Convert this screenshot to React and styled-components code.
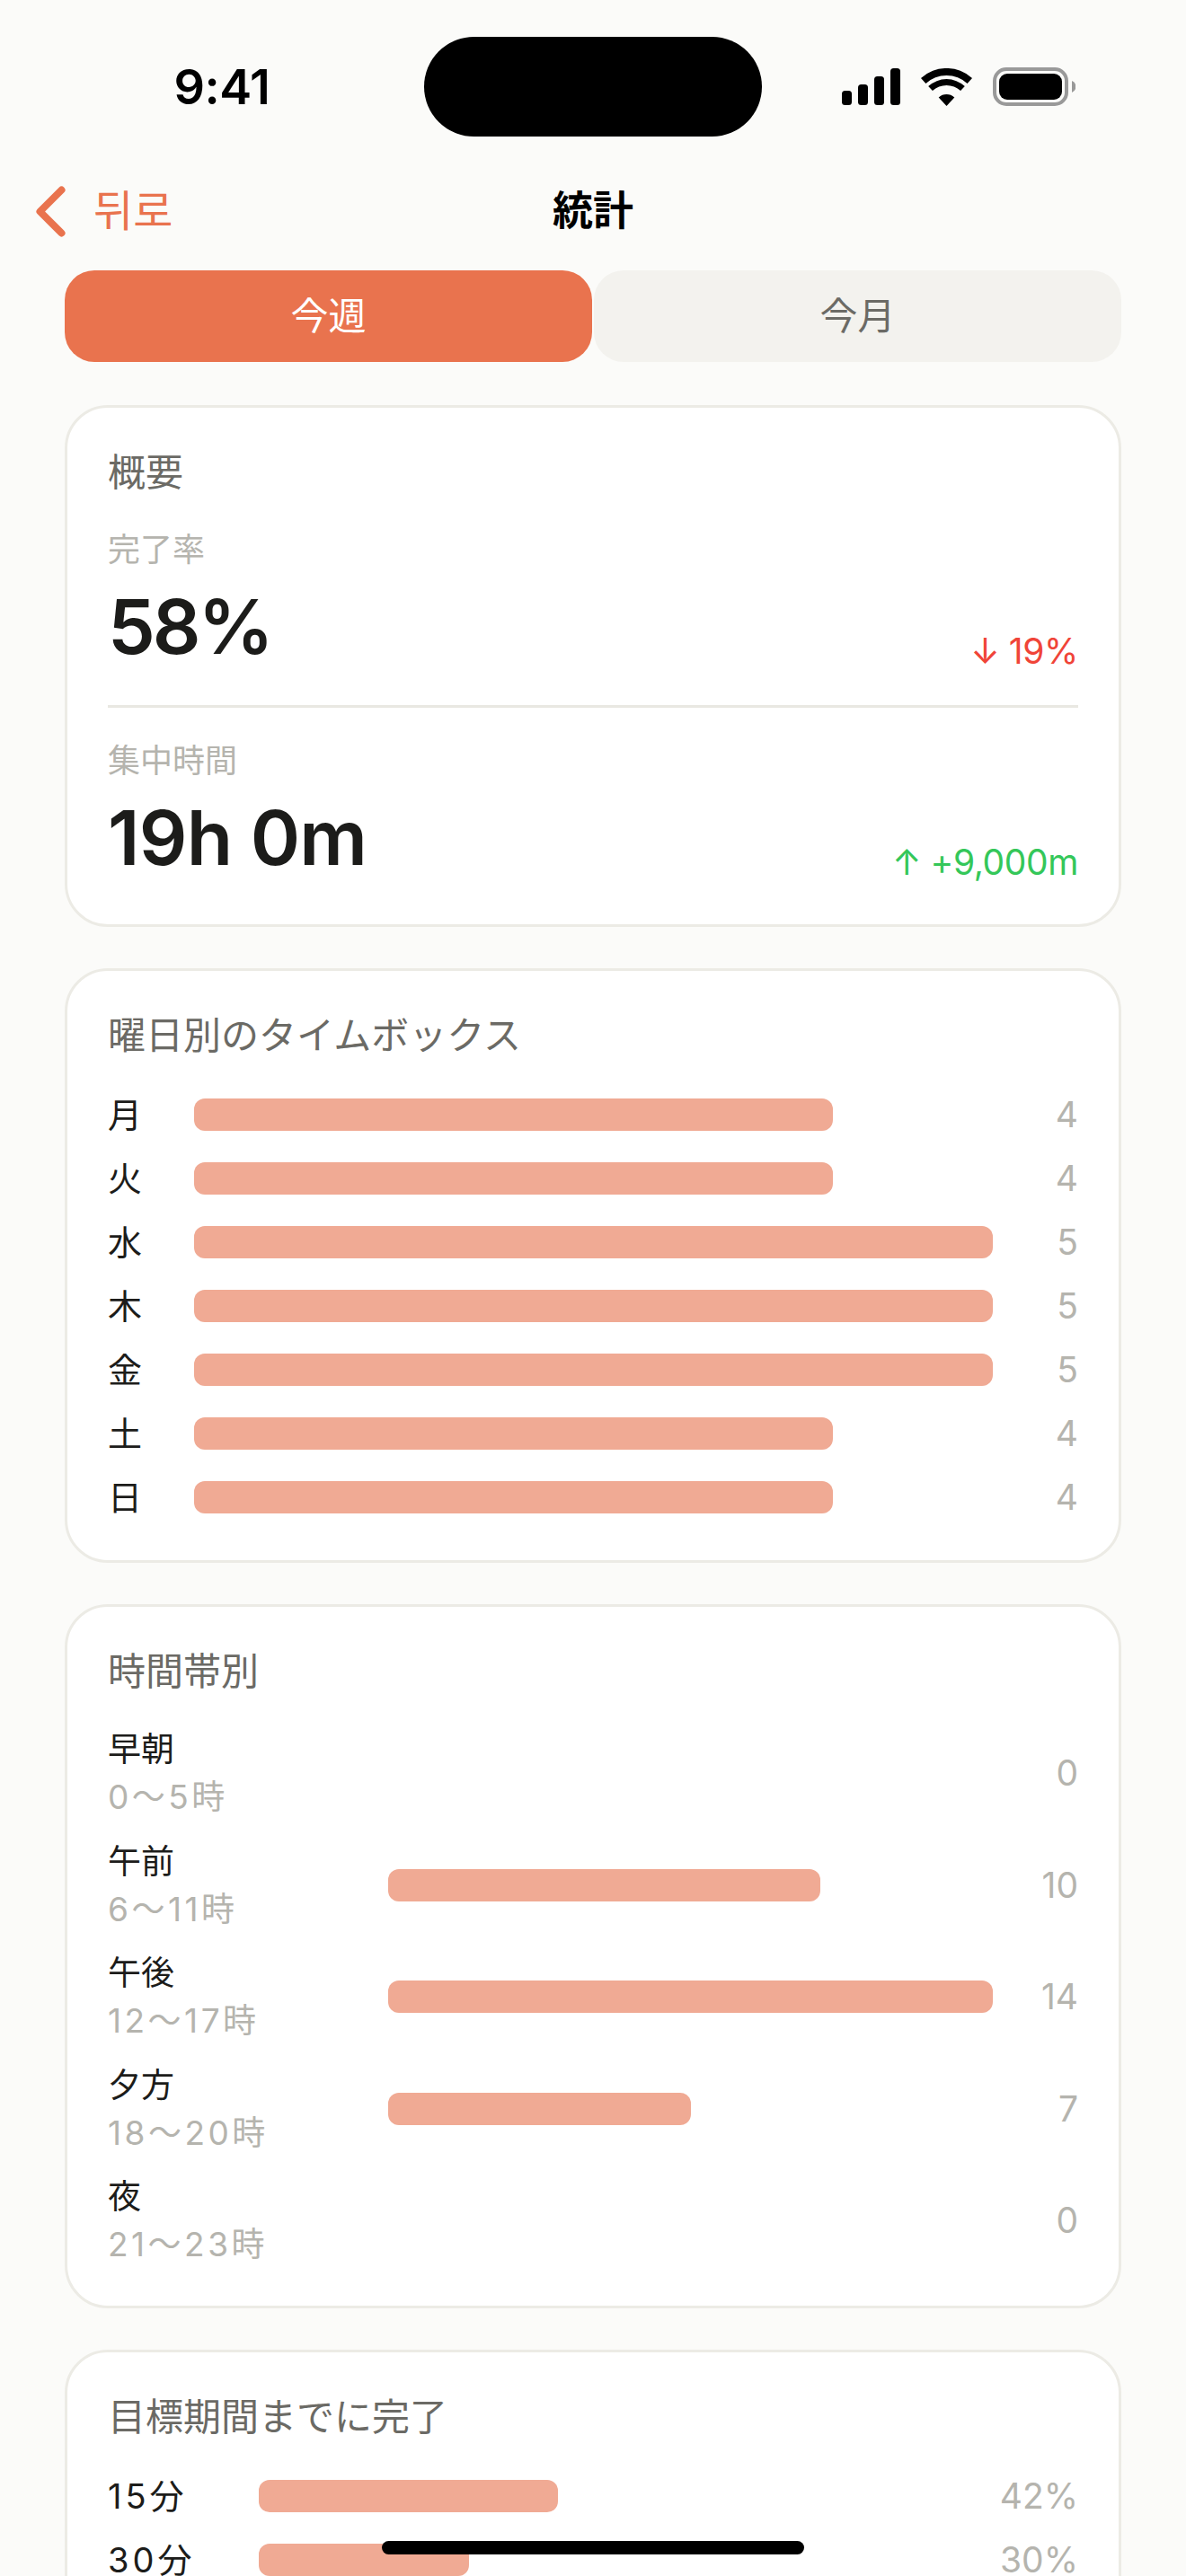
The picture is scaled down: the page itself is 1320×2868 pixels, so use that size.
import React from 'react';
import styled, { createGlobalStyle } from 'styled-components';

const accent = '#e9734e';
const fonts = `Inter, "Noto Sans CJK JP", "Noto Sans CJK KR", sans-serif`;

const GlobalStyle = createGlobalStyle`
  html, body {
    margin: 0;
    padding: 0;
    background: #fbfbf9;
  }
  body {
    font-family: ${fonts};
  }
`;

const Screen = styled.div`
  position: relative;
  width: 1320px;
  height: 2868px;
  overflow: hidden;
  background: #fbfbf9;
`;

const StatusBar = styled.div`
  display: grid;
  grid-template-columns: 472px 376px 472px;
  align-items: center;
  padding-top: 41px;
`;

const Time = styled.div`
  padding-left: 22px;
  text-align: center;
  font-size: 54px;
  line-height: 111px;
  font-weight: 600;
  letter-spacing: -0.5px;
  color: #000;
`;

const Island = styled.div`
  height: 111px;
  border-radius: 56px;
  background: #000;
`;

const StatusIcons = styled.div`
  display: flex;
  align-items: center;
  gap: 23px;
  padding-left: 89px;
  svg {
    display: block;
  }
`;

const Nav = styled.div`
  display: grid;
  grid-template-columns: 1fr auto 1fr;
  align-items: center;
  height: 72px;
  margin-top: 47px;
  padding-left: 40px;
`;

const BackLink = styled.div`
  display: flex;
  align-items: center;
  gap: 31px;
  color: ${accent};
  font-size: 48px;
  line-height: 72px;
`;

const NavTitle = styled.div`
  margin-left: -40px;
  font-size: 45px;
  line-height: 72px;
  font-weight: 700;
  color: #000;
`;

const Content = styled.div`
  display: flex;
  flex-direction: column;
  margin-top: 30px;
  padding: 0 72px;
`;

const Tabs = styled.div`
  display: flex;
  gap: 2px;
  margin-bottom: 48px;
`;

const Tab = styled.div`
  flex: 1;
  height: 102px;
  border-radius: 33px;
  background: ${(p) => (p.$active ? accent : '#f3f2ee')};
  color: ${(p) => (p.$active ? '#fff' : '#6b6a65')};
  font-size: 42px;
  line-height: 102px;
  text-align: center;
`;

const Card = styled.section`
  box-sizing: border-box;
  margin-bottom: 46px;
  padding: 45px 45px 48px;
  border: 3px solid #ecebe5;
  border-radius: 48px;
  background: #fff;
`;

const CardTitle = styled.h2`
  margin: 0 0 ${(p) => p.$gap}px;
  font-size: 42px;
  line-height: 54px;
  font-weight: 400;
  color: #6b6a65;
`;

const Metric = styled.div`
  padding-bottom: ${(p) => (p.$last ? 0 : 36)}px;
  margin-bottom: ${(p) => (p.$last ? -3 : 33)}px;
  border-bottom: ${(p) => (p.$last ? 'none' : '3px solid #e9e8e2')};
`;

const MetricLabel = styled.div`
  margin-bottom: 9px;
  font-size: 36px;
  line-height: 52px;
  color: #b5b4ae;
`;

const MetricRow = styled.div`
  display: flex;
  align-items: flex-end;
  justify-content: space-between;
`;

const MetricValue = styled.div`
  font-size: 84px;
  line-height: 102px;
  font-weight: 600;
  letter-spacing: ${(p) => p.$tracking}px;
  color: #1c1c1a;
`;

const Delta = styled.div`
  font-size: 39px;
  line-height: 48px;
  letter-spacing: -0.4px;
  color: ${(p) => (p.$up ? '#34c759' : '#f04438')};
`;

const Rows = styled.div`
  display: flex;
  flex-direction: column;
  gap: ${(p) => p.$gap}px;
`;

const Row = styled.div`
  display: flex;
  align-items: center;
`;

const Label = styled.div`
  flex: 0 0 ${(p) => p.$width}px;
  font-size: 38px;
  line-height: 44px;
  letter-spacing: ${(p) => p.$tracking || 0}px;
  color: #1c1c1a;
`;

const SlotName = styled.div`
  font-size: 37px;
  line-height: 41px;
  color: #1c1c1a;
`;

const SlotHours = styled.div`
  margin-top: 12px;
  font-size: 37px;
  line-height: 41px;
  letter-spacing: 3.5px;
  color: #b5b4ae;
`;

const Track = styled.div`
  flex: 1;
  height: 36px;
`;

const Fill = styled.div`
  height: 100%;
  border-radius: 12px;
  background: #f0aa94;
`;

const Count = styled.div`
  flex: 0 0 95px;
  font-size: 39px;
  line-height: 44px;
  text-align: right;
  color: #b5b4ae;
`;

const HomeIndicator = styled.div`
  position: absolute;
  left: 425px;
  bottom: 24px;
  width: 470px;
  height: 15px;
  border-radius: 8px;
  background: #000;
`;

const days = [
  ['月', 4],
  ['火', 4],
  ['水', 5],
  ['木', 5],
  ['金', 5],
  ['土', 4],
  ['日', 4],
];

const slots = [
  ['早朝', '0〜5時', 0],
  ['午前', '6〜11時', 10],
  ['午後', '12〜17時', 14],
  ['夕方', '18〜20時', 7],
  ['夜', '21〜23時', 0],
];

// bar lengths in this card are not the percentage itself
const goals = [
  ['15分', 42, 40.8],
  ['30分', 30, 28.6],
];

function SignalIcon() {
  return (
    <svg width="65" height="41" viewBox="0 0 65 41" fill="#000">
      <rect x="0" y="25" width="11" height="16" rx="3.5" />
      <rect x="18" y="18" width="11" height="23" rx="3.5" />
      <rect x="36" y="9" width="11" height="32" rx="3.5" />
      <rect x="54" y="0" width="11" height="41" rx="3.5" />
    </svg>
  );
}

function WifiIcon() {
  return (
    <svg width="57" height="42" viewBox="0 0 57 42" fill="#000">
      <path d="M0 11.1A42 42 0 0 1 57 11.1L51.6 17A34 34 0 0 0 5.4 17Z" />
      <path d="M8.2 20A30 30 0 0 1 48.8 20L44.1 25.1A23 23 0 0 0 12.9 25.1Z" />
      <path d="M19.7 32.4A13 13 0 0 1 37.3 32.4L28.5 42Z" />
    </svg>
  );
}

function BatteryIcon() {
  return (
    <svg width="92" height="43" viewBox="0 0 92 43">
      <rect x="2" y="2" width="80" height="39" rx="13" fill="none" stroke="#999" strokeWidth="4" />
      <rect x="7" y="7" width="70" height="29" rx="9" fill="#000" />
      <path d="M88 15a7 7 0 0 1 0 13Z" fill="#999" />
    </svg>
  );
}

function Chevron() {
  return (
    <svg width="33" height="57" viewBox="0 0 33 57" fill="none">
      <path d="M28.5 4.5L4.5 28.5L28.5 52.5" stroke={accent} strokeWidth="8" strokeLinecap="round" strokeLinejoin="round" />
    </svg>
  );
}

function App() {
  return (
    <Screen>
      <GlobalStyle />
      <StatusBar>
        <Time>9:41</Time>
        <Island />
        <StatusIcons>
          <SignalIcon />
          <WifiIcon />
          <BatteryIcon />
        </StatusIcons>
      </StatusBar>
      <Nav>
        <BackLink>
          <Chevron />
          뒤로
        </BackLink>
        <NavTitle>統計</NavTitle>
      </Nav>
      <Content>
        <Tabs>
          <Tab $active>今週</Tab>
          <Tab>今月</Tab>
        </Tabs>

        <Card>
          <CardTitle $gap={33}>概要</CardTitle>
          <Metric>
            <MetricLabel>完了率</MetricLabel>
            <MetricRow>
              <MetricValue $tracking={-3}>58%</MetricValue>
              <Delta>↓ 19%</Delta>
            </MetricRow>
          </Metric>
          <Metric $last>
            <MetricLabel>集中時間</MetricLabel>
            <MetricRow>
              <MetricValue $tracking={-0.8}>19h 0m</MetricValue>
              <Delta $up>↑ +9,000m</Delta>
            </MetricRow>
          </Metric>
        </Card>

        <Card>
          <CardTitle $gap={39}>曜日別のタイムボックス</CardTitle>
          <Rows $gap={27}>
            {days.map(([day, n]) => (
              <Row key={day}>
                <Label $width={96}>{day}</Label>
                <Track>
                  <Fill style={{ width: `${(n / 5) * 100}%` }} />
                </Track>
                <Count>{n}</Count>
              </Row>
            ))}
          </Rows>
        </Card>

        <Card>
          <CardTitle $gap={39}>時間帯別</CardTitle>
          <Rows $gap={30.5}>
            {slots.map(([name, hours, n]) => (
              <Row key={name}>
                <Label $width={312}>
                  <SlotName>{name}</SlotName>
                  <SlotHours>{hours}</SlotHours>
                </Label>
                <Track>
                  <Fill style={{ width: `${(n / 14) * 100}%` }} />
                </Track>
                <Count>{n}</Count>
              </Row>
            ))}
          </Rows>
        </Card>

        <Card>
          <CardTitle $gap={39}>目標期間までに完了</CardTitle>
          <Rows $gap={27}>
            {goals.map(([name, pct, bar]) => (
              <Row key={name}>
                <Label $width={168} $tracking={4}>{name}</Label>
                <Track>
                  <Fill style={{ width: `${bar}%` }} />
                </Track>
                <Count>{pct}%</Count>
              </Row>
            ))}
          </Rows>
        </Card>
      </Content>
      <HomeIndicator />
    </Screen>
  );
}

export default App;
